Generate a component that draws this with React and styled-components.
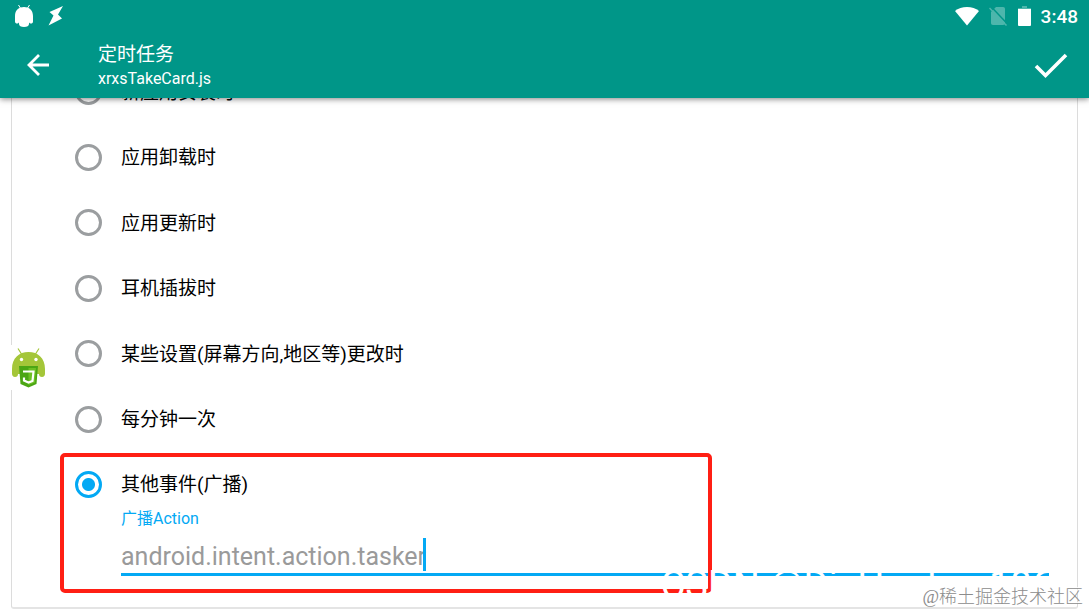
import { useState } from "react";
import styled, { createGlobalStyle } from "styled-components";

const primary = "#009688";
const accent = "#03a9f4";
const baseFont = `Roboto, "Noto Sans CJK SC", sans-serif`;

const GlobalStyle = createGlobalStyle`
  * {
    box-sizing: border-box;
  }
  body {
    margin: 0;
    background: #fff;
    font-family: ${baseFont};
    color: #000;
  }
`;

const Page = styled.div`
  position: relative;
  display: flex;
  flex-direction: column;
  height: 100vh;
  overflow: hidden;
`;

const Header = styled.header`
  position: relative;
  z-index: 2;
  flex: none;
  background: ${primary};
  color: #fff;
  box-shadow: 0 1px 6px rgba(0, 0, 0, 0.5);
`;

const StatusBar = styled.div`
  display: flex;
  align-items: center;
  justify-content: space-between;
  height: 32px;
  padding: 0 11px 0 14px;
`;

const StatusGroup = styled.div`
  display: flex;
  align-items: center;
  gap: ${({ $gap }) => $gap}px;
`;

const Clock = styled.span`
  padding-top: 2px;
  font-size: 19px;
  font-weight: 500;
  line-height: 24px;
`;

const Toolbar = styled.div`
  display: flex;
  align-items: center;
  height: 66px;
  padding: 0 20px 0 24px;
`;

const IconButton = styled.button`
  display: flex;
  padding: 0;
  border: 0;
  background: none;
  color: inherit;
  cursor: pointer;
`;

const Titles = styled.div`
  flex: 1;
  margin-left: 46px;
  padding-top: 2px;
`;

const Title = styled.h1`
  margin: 0;
  font-size: 19px;
  font-weight: 400;
  line-height: 26px;
`;

const Subtitle = styled.p`
  margin: 0;
  font-size: 16px;
  line-height: 22px;
`;

const Content = styled.main`
  display: flex;
  flex: 1;
  min-height: 0;
  padding: 0 11px 4px;
`;

const Card = styled.form`
  display: flex;
  flex: 1;
  flex-direction: column;
  margin-top: -40px;
  padding: 0 28px 31px 63px;
  border: 1px solid #dcdcdc;
  border-bottom: 2px solid #e4e4e4;
  border-radius: 3px;
`;

const Options = styled.div`
  display: grid;
  flex: 1;
  grid-auto-rows: 1fr;
`;

const Option = styled.label`
  display: flex;
  align-items: center;
  gap: 19px;
  min-height: 42px;
  font-size: 19px;
  line-height: 28px;
  cursor: pointer;
`;

const OptionText = styled.span`
  padding-top: 2px;
`;

const Radio = styled.input`
  flex: none;
  width: 27px;
  height: 27px;
  margin: 0;
  appearance: none;
  border: 3px solid #9b9ea0;
  border-radius: 50%;
  cursor: pointer;
  &:checked {
    border-color: ${accent};
    background: radial-gradient(circle, ${accent} 6px, transparent 7px);
  }
`;

const Highlighted = styled.div`
  position: relative;
  padding-top: 11px;
`;

const Frame = styled.div`
  position: absolute;
  top: 1px;
  left: -15px;
  width: 652px;
  height: 140px;
  border: 4px solid #ff1f14;
  border-radius: 5px;
  pointer-events: none;
`;

const Field = styled.div`
  position: relative;
  display: flex;
  flex-direction: column;
  margin-left: 46px;
`;

const FieldLabel = styled.label`
  padding-top: 2px;
  color: ${accent};
  font-size: 16px;
  line-height: 24px;
`;

const TextInput = styled.input`
  width: 100%;
  height: 45px;
  padding: 8px 0 0;
  border: 0;
  border-bottom: 3px solid ${accent};
  outline: 0;
  background: none;
  color: #000;
  font-family: ${baseFont};
  font-size: 25px;
  &::placeholder {
    color: #9a9a9a;
    opacity: 1;
  }
`;

const Caret = styled.span`
  position: absolute;
  bottom: 5px;
  left: 302px;
  width: 3px;
  height: 33px;
  background: ${accent};
`;

const FloatingButton = styled.button`
  position: absolute;
  top: 345px;
  left: 10px;
  z-index: 3;
  padding: 3px 1px 2px 2px;
  border: 0;
  background: #fff;
  cursor: pointer;
  svg {
    display: block;
  }
`;

const AuthorMark = styled.span`
  position: absolute;
  right: 36px;
  bottom: 7px;
  z-index: 3;
  color: #fff;
  font-size: 38px;
  line-height: 42px;
  white-space: nowrap;
  pointer-events: none;
`;

const SiteMark = styled.span`
  position: absolute;
  right: 6px;
  bottom: 4px;
  z-index: 3;
  color: #8c8c8c;
  font-family: "Liberation Serif", "Noto Sans CJK SC", serif;
  font-size: 18px;
  font-weight: 300;
  line-height: 24px;
  text-shadow: -1px -1px 0 #fff;
  pointer-events: none;
`;

const AndroidIcon = () => (
  <svg width="20" height="24" viewBox="0 0 20 24" fill="#fff" aria-hidden="true">
    <path d="M4.500 1 7 5M15.500 1 13 5" stroke="#fff" strokeWidth="1" />
    <path d="M1 12C1 6 5 3 10 3s9 3 9 9v5.500c0 1.500-1 2-2 2s-1.700-.5-2-1v1.500c0 2-2 3-5 3s-5-1-5-3v-1.500c-.3.500-1 1-2 1s-2-.5-2-2z" />
  </svg>
);

const BoltIcon = () => (
  <svg width="16" height="20" viewBox="0 0 16 20" fill="#fff" aria-hidden="true">
    <path d="M15 0 1.500 6l4 3.500-5 10L14 12.500l-4-4z" />
  </svg>
);

const WifiIcon = () => (
  <svg width="24" height="20" viewBox="0 0 24 20" fill="#fff" aria-hidden="true">
    <path d="M12 19.500 0 5C6-.3 18-.3 24 5z" />
  </svg>
);

const NoSimIcon = () => (
  <svg width="19" height="20" viewBox="0 0 19 20" aria-hidden="true">
    <path
      d="M7 1h7c1.300 0 2 .7 2 2v14c0 1.300-.7 2-2 2H4c-1.300 0-2-.7-2-2V6z"
      fill="#4db6ac"
    />
    <path d="M2 .5 18 17.500" stroke={primary} strokeWidth="1.500" />
    <path d="M.5 2 17.500 19.500" stroke="#4db6ac" strokeWidth="1.500" />
  </svg>
);

const BatteryIcon = () => (
  <svg width="13" height="20" viewBox="0 0 13 20" aria-hidden="true">
    <path d="M4 0h5v2h4v2H0V2h4z" fill="#4db6ac" />
    <path d="M0 3h13v16a1 1 0 0 1-1 1H1a1 1 0 0 1-1-1z" fill="#fff" />
  </svg>
);

const BackIcon = () => (
  <svg width="28" height="28" viewBox="0 0 28 28" fill="none" aria-hidden="true">
    <path d="M25 14H5M15 4 5 14l10 10" stroke="#fff" strokeWidth="2.800" />
  </svg>
);

const DoneIcon = () => (
  <svg width="36" height="32" viewBox="0 0 36 32" fill="none" aria-hidden="true">
    <path d="M3 17l9.500 9.500L33 6" stroke="#fff" strokeWidth="3.600" />
  </svg>
);

const RobotIcon = () => (
  <svg width="33" height="40" viewBox="0 0 33 40" aria-hidden="true">
    <path d="M6 .5 9.500 6M27 .5 23.500 6" stroke="#a4c639" strokeWidth="1.200" />
    <path
      d="M0 21C0 10 7 4 16.500 4S33 10 33 21v4.500c0 2-1 3.500-3 3.500s-3-1-3-3H6c0 2-1 3-3 3s-3-1.500-3-3.500z"
      fill="#a4c639"
    />
    <circle cx="9.500" cy="11.500" r="1.700" fill="#fff" />
    <circle cx="24" cy="11.500" r="1.700" fill="#fff" />
    <path d="M7 18h19l-1.500 18-8 3.500-8-3.500z" fill="#4ba614" />
    <path d="M16.500 20H24l-1 14.500-6.500 2.500z" fill="#6cc024" />
    <path d="M11 23.500h10.500L20.500 33l-4 1.500-4.500-2v-3" stroke="#fff" strokeWidth="2.200" fill="none" />
  </svg>
);

const options = [
  "新应用安装时",
  "应用卸载时",
  "应用更新时",
  "耳机插拔时",
  "某些设置(屏幕方向,地区等)更改时",
  "每分钟一次",
];
const broadcast = "其他事件(广播)";

export default function App() {
  const [selected, setSelected] = useState(broadcast);
  const [action, setAction] = useState("");

  const renderOption = (name) => (
    <Option key={name}>
      <Radio
        type="radio"
        name="event"
        value={name}
        checked={selected === name}
        onChange={() => setSelected(name)}
      />
      <OptionText>{name}</OptionText>
    </Option>
  );

  return (
    <Page>
      <GlobalStyle />
      <Header>
        <StatusBar>
          <StatusGroup $gap={14}>
            <AndroidIcon />
            <BoltIcon />
          </StatusGroup>
          <StatusGroup $gap={10}>
            <WifiIcon />
            <NoSimIcon />
            <BatteryIcon />
            <Clock>3:48</Clock>
          </StatusGroup>
        </StatusBar>
        <Toolbar>
          <IconButton type="button" aria-label="返回">
            <BackIcon />
          </IconButton>
          <Titles>
            <Title>定时任务</Title>
            <Subtitle>xrxsTakeCard.js</Subtitle>
          </Titles>
          <IconButton type="button" aria-label="完成">
            <DoneIcon />
          </IconButton>
        </Toolbar>
      </Header>
      <Content>
        <Card>
          <Options>{options.map(renderOption)}</Options>
          <Highlighted>
            {renderOption(broadcast)}
            <Field>
              <FieldLabel htmlFor="action">广播Action</FieldLabel>
              <TextInput
                id="action"
                placeholder="android.intent.action.tasker"
                value={action}
                onChange={(e) => setAction(e.target.value)}
              />
              {!action && <Caret />}
            </Field>
            <Frame />
          </Highlighted>
        </Card>
      </Content>
      <FloatingButton type="button" aria-label="Auto.js">
        <RobotIcon />
      </FloatingButton>
      <AuthorMark>CSDN @DisHunter_186</AuthorMark>
      <SiteMark>@稀土掘金技术社区</SiteMark>
    </Page>
  );
}
